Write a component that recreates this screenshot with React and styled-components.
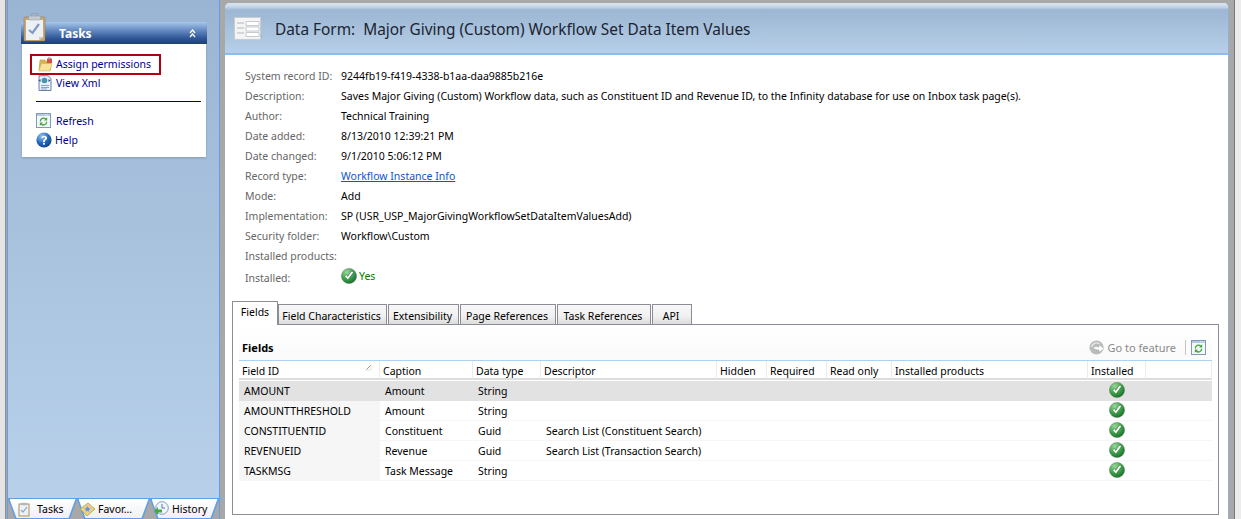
import React from "react";
import styled, { createGlobalStyle } from "styled-components";

const Global = createGlobalStyle`
  html, body { margin: 0; padding: 0; }
  body { font-family: "Noto Sans", "DejaVu Sans", sans-serif; font-size: 10.5px; color: #000; }
  #root { width: 1241px; height: 519px; overflow: hidden; }
`;

const Page = styled.div`
  display: flex; width: 1241px; height: 519px; overflow: hidden;
  background: #a8a8a8;
`;
const LeftFrame = styled.div`
  width: 7px; flex: none; background: linear-gradient(90deg, #e4e4e4 0, #e4e4e4 5px, #8f8f8f 5px, #8f8f8f 6px, #a8a8a8 6px);
`;
const RightFrame = styled.div`
  flex: 1; background: linear-gradient(90deg, #a8a8a8 0, #a8a8a8 5px, #77777f 5px, #77777f 6px, #ececec 6px);
`;
const Sidebar = styled.aside`
  width: 213px; flex: none; display: flex; flex-direction: column;
  box-sizing: border-box; border-left: 1px solid #5f9fe6; border-right: 1px solid #5f9fe6;
`;
const SidebarBody = styled.div`
  flex: 1; padding: 22px 13px 0 13px;
  background: linear-gradient(180deg, #9ab5d3 0, #b8d0ea 100%);
  border-bottom: 1px solid #5f9fe6;
`;
const TaskPanel = styled.section`
  width: 186px; position: relative;
`;
const TaskHeader = styled.header`
  height: 22px; display: flex; align-items: center; justify-content: space-between;
  padding: 0 11px 0 38px;
  background: linear-gradient(180deg, #a6c6ea 0, #6a8fc4 35%, #2e5596 75%, #1d3f7c 100%);
  color: #fff; font: bold 12px "Noto Sans", sans-serif;
`;
const ClipboardSlot = styled.span`
  position: absolute; left: 2px; top: -10px; width: 24px; height: 32px;
`;
const TaskBody = styled.div`
  background: #fff; margin: 0 1px; height: 113px; box-sizing: border-box;
  display: flex; flex-direction: column; padding: 10px 5px 0 8px;
  box-shadow: 0 1px 2px rgba(70,90,120,.35);
`;
const TaskLink = styled.a`
  display: flex; align-items: center; gap: ${p => p.$gap || 4}px; height: 19px; color: #00008f;
  padding-left: ${p => p.$pad || 7}px;
  box-sizing: border-box; text-decoration: none; white-space: nowrap;
  ${p => p.$marked && "width: 131px; border: 2px solid #b20010; padding: 0 0 2px 6px; height: 21px; margin-bottom: -2px;"}
`;
const IconBox = styled.span`
  width: ${p => p.$w || 15}px; height: ${p => p.$w || 15}px; flex: none; display: inline-flex;
`;
const Rule = styled.hr`
  border: 0; border-top: 1px solid #00006e; margin: 9px 0 9px 6px; height: 0; width: 165px;
`;
const TabStrip = styled.nav`
  height: 20px; flex: none; display: flex; background: #a8a8a8;
`;
const SideTab = styled.div`
  width: ${p => p.$w}px; flex: none; position: relative; background: #5f9fe6;
  clip-path: polygon(0 0, 100% 0, calc(100% - 7px) 100%, 7px 100%);
  &::before {
    content: ""; position: absolute; inset: 0 1.5px 1px 1.5px;
    clip-path: polygon(0 0, 100% 0, calc(100% - 7px) 100%, 7px 100%);
    background: linear-gradient(180deg, #fff 0, #eef0f3 100%);
  }
`;
const SideTabInner = styled.span`
  position: relative; display: flex; align-items: center; gap: ${p => p.$gap}px;
  padding-left: ${p => p.$pad}px;
  height: 20px; white-space: nowrap;
`;
const Gap = styled.div` width: 5px; flex: none; `;
const Main = styled.main`
  width: 1004px; flex: none; margin-top: 3px; background: #fff; display: flex; flex-direction: column;
  border-radius: 5px 5px 0 0; overflow: hidden;
  border-right: 1px solid #94aecb; box-sizing: border-box;
`;
const TitleBar = styled.header`
  height: 52px; flex: none; box-sizing: border-box; display: flex; align-items: center; gap: 12px; padding: 2px 0 0 9px;
  background: linear-gradient(180deg, #dbe5f0 0, #c5d5e6 4px, #9cb6d3 7px, #b7cfe8 100%);
  border-bottom: 2px solid #8dbcef;
`;
const Title = styled.h1`
  margin: 0; font: 400 15.4px "Noto Sans", sans-serif; color: #1a2430; white-space: pre;
`;
const Details = styled.dl`
  margin: 0; padding: 11px 0 0 20px; display: grid; grid-template-columns: 96px 1fr;
  grid-auto-rows: 20px; align-items: center; height: 246px; box-sizing: border-box; align-content: start;
`;
const Term = styled.dt` color: #666; white-space: nowrap; ${p => p.$last && "margin-top: 4px;"} `;
const Def = styled.dd`
  margin: 0; white-space: nowrap; display: flex; align-items: center; gap: 2px;
  ${p => p.$ok && "color: #008000;"}
`;
const Anchor = styled.a` color: #0b57c5; text-decoration: underline; `;
const TabsRow = styled.div`
  display: flex; align-items: flex-end; height: 23px; margin-left: 7px; flex: none; position: relative; z-index: 1;
`;
const Tab = styled.div`
  box-sizing: border-box; width: ${p => p.$w}px; text-align: center; white-space: nowrap; flex: none;
  border: 1px solid #8c8c96; border-left-width: ${p => p.$first ? 1 : 0}px;
  ${p => p.$active
    ? "background: #fff; border-bottom: 0; line-height: 20px; margin-bottom: -1px; height: 24px;"
    : "height: 20px; line-height: 22px; padding-right: 2px; border-bottom: 0; background: linear-gradient(180deg,#f7f7f7 0,#f0f0f0 60%,#dcdcdc 100%); margin-right: 1px; border-left: 1px solid #8c8c96;"}
`;
const TabPanel = styled.section`
  margin-left: 7px; width: 987px; height: 191px; flex: none; box-sizing: border-box;
  border: 1px solid #8c8c96; padding: 0 6px; background: #fff;
`;
const PanelHead = styled.div`
  display: flex; align-items: center; justify-content: space-between; height: 36px; box-sizing: border-box;
  border-bottom: 1px solid #a9d2f5; padding: 9px 6px 0 3px;
  background: linear-gradient(180deg, #fff 0, #fafafa 100%);
`;
const PanelTitle = styled.h2` margin: 0; font: bold 11px "Noto Sans", sans-serif; `;
const Tools = styled.div` display: flex; align-items: center; color: #8a8a8a; font-size: 11px; `;
const ToolSep = styled.span` width: 1px; height: 15px; background: #c4c4c4; margin: 0 5px 0 9px; `;
const Grid = styled.div`
  display: grid; grid-template-columns: 141px 93px 68px 176px 50px 60px 65px 196px 58px 66px;
`;
const HeadCell = styled.div`
  height: 19px; line-height: 20px; padding-left: 3px; border-right: 1px solid #ececec; box-sizing: border-box;
  border-bottom: 2px solid #dcdcdc; position: relative; white-space: nowrap;
`;
const SortMark = styled.span`
  position: absolute; right: 7px; top: 3px; width: 7px; height: 7px; display: flex;
`;
const Rows = styled.div` margin-top: 1px; `;
const Cell = styled.div`
  height: 20px; line-height: 20px; padding-left: 5px; white-space: nowrap; box-sizing: border-box;
  background: ${p => p.$sel ? "#e2e2e2" : p.$key ? "#f6f6f6" : "#fff"};
  ${p => p.$center && "display: flex; justify-content: center; align-items: flex-start; padding: 1px 0 0;"}
  ${p => !p.$sel && !p.$key && "border-bottom: 1px solid #f6f6f6;"}
`;

const Check = ({ size = 16 }) => (
  <svg width={size} height={size} viewBox="0 0 16 16">
    <defs>
      <radialGradient id="ck" cx="35%" cy="25%" r="85%">
        <stop offset="0" stopColor="#9ad79a" /><stop offset=".55" stopColor="#3aa046" /><stop offset="1" stopColor="#146324" />
      </radialGradient>
    </defs>
    <circle cx="8" cy="8" r="7.6" fill="url(#ck)" stroke="#5b7f60" strokeWidth=".5" />
    <path d="M3.600 8.200 6.900 12 12.800 4.100 10.200 3.300 6.700 8.500 5.300 6.600Z" fill="#fff" stroke="#1d5c2a" strokeWidth=".5" />
  </svg>
);
const Clipboard = () => (
  <svg width="24" height="32" viewBox="0 0 24 32">
    <path d="M3 25l18 5 3-4z" fill="#2a3f66" opacity=".5" />
    <rect x="1" y="5" width="21" height="24" rx="1" fill="#c9a877" stroke="#9a7b4d" strokeWidth=".6" />
    <path d="M3 8h17v17l-4 3H3z" fill="#eef1f4" />
    <path d="M20 25l-4 3v-3z" fill="#c7ccd2" />
    <path d="M6 18l3.500 3L16 12" fill="none" stroke="#7d9cc8" strokeWidth="2.200" />
    <rect x="8" y="1.500" width="7" height="3" rx="1.500" fill="none" stroke="#9aa4ae" strokeWidth="1.200" />
    <rect x="5.500" y="4" width="12" height="4" rx="1" fill="#c2cad2" stroke="#8f99a3" strokeWidth=".5" />
  </svg>
);
const Chevrons = () => (
  <svg width="7" height="9" viewBox="0 0 7 9" fill="none" stroke="#fff" strokeWidth="1.200">
    <path d="M1 4l2.500-3L6 4M1 8l2.500-3L6 8" />
  </svg>
);
const FolderLock = () => (
  <svg width="15" height="16" viewBox="0 0 15 16">
    <path d="M2 4h5l1 1.500h4.500V14H1z" fill="#d9b552" stroke="#b08e36" strokeWidth=".5" />
    <path d="M3.500 7.500H14L12 15H.8z" fill="#f7e29a" stroke="#c8a54a" strokeWidth=".5" />
    <rect x="9" y="3" width="5" height="4" fill="#d8504a" />
    <path d="M10 3.200V2h3v1.200" stroke="#9a5a50" fill="none" strokeWidth=".8" />
  </svg>
);
const XmlDoc = () => (
  <svg width="15" height="16" viewBox="0 0 15 16">
    <path d="M2 .7h9L14 3.500v12H2z" fill="#e9f0fa" stroke="#46628f" strokeWidth=".8" />
    <path d="M4 10.500h8M4 12.500h8M4 14h6" stroke="#6f8fbe" strokeWidth=".8" />
    <circle cx="7.500" cy="5.500" r="2.800" fill="#3a8fd0" />
    <path d="M6 4.500l2.500-.5.5 2-2 1.200z" fill="#4eaa50" />
    <path d="M1.500 5.500l2-1.500v3zM13.500 5.500l-2-1.500v3z" fill="#2f4f86" />
  </svg>
);
const RefreshWin = () => (
  <svg width="15" height="15" viewBox="0 0 15 15">
    <rect x=".5" y=".5" width="14" height="14" fill="#f5f8fb" stroke="#7f9ab5" />
    <rect x="1" y="1" width="13" height="2" fill="#b4c9de" />
    <path d="M9 1.800h1M11 1.800h1M13 1.800h.6" stroke="#fff" strokeWidth=".8" />
    <path d="M4.300 8.500A3.200 3.200 0 0 1 9.800 6.200" fill="none" stroke="#3fa536" strokeWidth="1.300" />
    <path d="M11.200 4.300v3.200H8z" fill="#3fa536" />
    <path d="M10.700 8.800A3.200 3.200 0 0 1 5.200 11" fill="none" stroke="#3fa536" strokeWidth="1.300" />
    <path d="M3.800 12.800V9.600H7z" fill="#3fa536" />
  </svg>
);
const Help = () => (
  <svg width="16" height="16" viewBox="0 0 16 16">
    <defs>
      <radialGradient id="hp" cx="35%" cy="25%" r="85%">
        <stop offset="0" stopColor="#8fc1f0" /><stop offset=".55" stopColor="#1e66c0" /><stop offset="1" stopColor="#0c3d87" />
      </radialGradient>
    </defs>
    <circle cx="8" cy="8" r="7.600" fill="url(#hp)" />
    <path d="M5.400 6.200C5.600 4.400 7 3.700 8.300 3.700c1.600 0 2.800 1 2.800 2.300 0 2-2.300 2-2.300 3.900H7c0-2.600 2.100-2.600 2.100-3.800 0-.5-.4-.9-1-.9-.7 0-1 .4-1.100 1z" fill="#fff" />
    <rect x="7" y="10.800" width="1.900" height="1.900" fill="#fff" />
  </svg>
);
const FormIcon = () => (
  <svg width="29" height="26" viewBox="0 0 29 26">
    <path d="M3 24h22l3-3v-2H3z" fill="#8ea4bd" opacity=".6" />
    <rect x=".5" y="1.500" width="26" height="22" fill="#f4f4f4" stroke="#c8ccd2" />
    <path d="M3 7h7M3 12h7M3 17h7" stroke="#b8b8b8" strokeWidth="1" />
    <path d="M12 5.500h13v4H12zM12 11h13v4H12zM12 16.500h13v4H12z" fill="#fff" stroke="#b9bfc6" strokeWidth=".8" />
  </svg>
);
const GoFeature = () => (
  <svg width="16" height="15" viewBox="0 0 16 15">
    <circle cx="7.500" cy="7.500" r="7" fill="#b9bcbc" />
    <path d="M2.500 7a5 5 0 0 1 8-3" fill="none" stroke="#e6e6e6" strokeWidth="1.400" />
    <path d="M4 8c2-2 4-1.500 6-1V4.500L15 8.500l-5 4V10c-2 0-4-.5-6-2z" fill="#fff" stroke="#a0a0a0" strokeWidth=".5" />
  </svg>
);
const TaskTabIcon = () => (
  <svg width="14" height="15" viewBox="0 0 14 15">
    <rect x="1" y="2" width="10" height="12" fill="#eef1f4" stroke="#b08e5a" strokeWidth="1" />
    <rect x="3.500" y=".8" width="5" height="2.400" fill="#aeb6be" />
    <path d="M3 8l2 2 4-5" stroke="#8aa6cf" strokeWidth="1.200" fill="none" />
  </svg>
);
const FavIcon = () => (
  <svg width="17" height="15" viewBox="0 0 17 15">
    <path d="M1 7l8-6 7 6-8 7z" fill="#e9cf84" stroke="#a98f4c" strokeWidth=".7" />
    <path d="M8.500 4l1 2 2 .3-1.500 1.500.3 2-1.800-1-1.800 1 .3-2L5.500 6.300l2-.3z" fill="#5f94d8" />
  </svg>
);
const ClockIcon = () => (
  <svg width="16" height="16" viewBox="0 0 16 16">
    <circle cx="9" cy="7" r="6.300" fill="#eef5fb" stroke="#7fa3c4" />
    <path d="M9 3v4h3" stroke="#5d7f9f" fill="none" />
    <path d="M1 10l4-4v2.500h4v3H5V14z" fill="#46a83c" />
  </svg>
);
const SortIcon = () => (
  <svg width="7" height="7" viewBox="0 0 7 7"><path d="M6 1 1 6" stroke="#9a9a9a" /><path d="M6 1v5H1" stroke="#e2e2e2" fill="none" /></svg>
);

const details = [
  ["System record ID:", "9244fb19-f419-4338-b1aa-daa9885b216e"],
  ["Description:", "Saves Major Giving (Custom) Workflow data, such as Constituent ID and Revenue ID, to the Infinity database for use on Inbox task page(s)."],
  ["Author:", "Technical Training"],
  ["Date added:", "8/13/2010 12:39:21 PM"],
  ["Date changed:", "9/1/2010 5:06:12 PM"],
  ["Record type:", <Anchor>Workflow Instance Info</Anchor>],
  ["Mode:", "Add"],
  ["Implementation:", "SP (USR_USP_MajorGivingWorkflowSetDataItemValuesAdd)"],
  ["Security folder:", "Workflow\\Custom"],
  ["Installed products:", ""],
];
const tabs = [
  ["Fields", 46], ["Field Characteristics", 109], ["Extensibility", 71],
  ["Page References", 96], ["Task References", 94], ["API", 40],
];
const columns = ["Field ID", "Caption", "Data type", "Descriptor", "Hidden", "Required", "Read only", "Installed products", "Installed", ""];
const rows = [
  ["AMOUNT", "Amount", "String", ""],
  ["AMOUNTTHRESHOLD", "Amount", "String", ""],
  ["CONSTITUENTID", "Constituent", "Guid", "Search List (Constituent Search)"],
  ["REVENUEID", "Revenue", "Guid", "Search List (Transaction Search)"],
  ["TASKMSG", "Task Message", "String", ""],
];

export default function App() {
  return (
    <Page>
      <Global />
      <LeftFrame />
      <Sidebar>
        <SidebarBody>
          <TaskPanel>
            <ClipboardSlot><Clipboard /></ClipboardSlot>
            <TaskHeader><span>Tasks</span><Chevrons /></TaskHeader>
            <TaskBody>
              <TaskLink $marked $gap={3}><IconBox><FolderLock /></IconBox>Assign permissions</TaskLink>
              <TaskLink><IconBox><XmlDoc /></IconBox>View Xml</TaskLink>
              <Rule />
              <TaskLink $pad={6} $gap={5}><IconBox><RefreshWin /></IconBox>Refresh</TaskLink>
              <TaskLink $pad={6} $gap={3}><IconBox $w={16}><Help /></IconBox>Help</TaskLink>
            </TaskBody>
          </TaskPanel>
        </SidebarBody>
        <TabStrip>
          <SideTab $w={69}><SideTabInner $pad={10} $gap={5}><TaskTabIcon />Tasks</SideTabInner></SideTab>
          <SideTab $w={73}><SideTabInner $pad={2} $gap={2}><FavIcon />Favor...</SideTabInner></SideTab>
          <SideTab $w={69}><SideTabInner $pad={3} $gap={3}><ClockIcon />History</SideTabInner></SideTab>
        </TabStrip>
      </Sidebar>
      <Gap />
      <Main>
        <TitleBar>
          <FormIcon />
          <Title>{"Data Form:  Major Giving (Custom) Workflow Set Data Item Values"}</Title>
        </TitleBar>
        <Details>
          {details.map(([k, v]) => (
            <React.Fragment key={k}>
              <Term>{k}</Term>
              <Def>{v}</Def>
            </React.Fragment>
          ))}
          <Term $last>Installed:</Term>
          <Def $ok><Check />Yes</Def>
        </Details>
        <TabsRow>
          {tabs.map(([t, w], i) => (
            <Tab key={t} $w={w} $active={i === 0} $first={i === 0}>{t}</Tab>
          ))}
        </TabsRow>
        <TabPanel>
          <PanelHead>
            <PanelTitle>Fields</PanelTitle>
            <Tools><GoFeature />&nbsp;Go to feature<ToolSep /><RefreshWin /></Tools>
          </PanelHead>
          <Grid>
            {columns.map((c, i) => (
              <HeadCell key={i}>{c}{i === 0 && <SortMark><SortIcon /></SortMark>}</HeadCell>
            ))}
          </Grid>
          <Rows>
            {rows.map((r, ri) => (
              <Grid key={r[0]}>
                <Cell $sel={ri === 0} $key>{r[0]}</Cell>
                <Cell $sel={ri === 0}>{r[1]}</Cell>
                <Cell $sel={ri === 0}>{r[2]}</Cell>
                <Cell $sel={ri === 0}>{r[3]}</Cell>
                <Cell $sel={ri === 0} />
                <Cell $sel={ri === 0} />
                <Cell $sel={ri === 0} />
                <Cell $sel={ri === 0} />
                <Cell $sel={ri === 0} $center><Check /></Cell>
                <Cell $sel={ri === 0} />
              </Grid>
            ))}
          </Rows>
        </TabPanel>
      </Main>
      <RightFrame />
    </Page>
  );
}
